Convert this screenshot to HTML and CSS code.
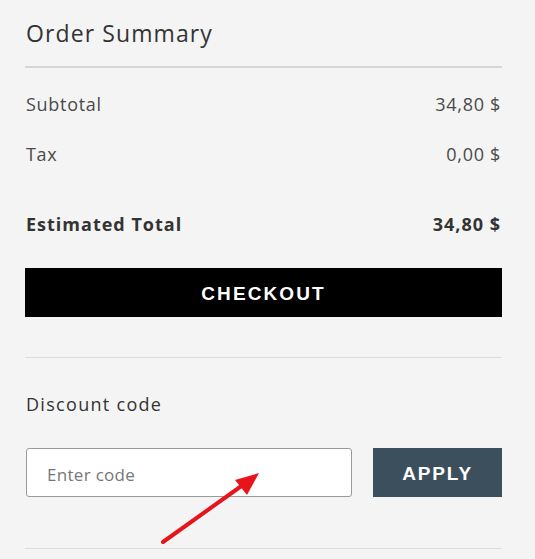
FILE: index.html
```html
<html lang="en">
  <head>
    <title>Order Summary</title>
    <link rel="stylesheet" href="styles.css">
  </head>
  <body>
    <div class="summary">
      <h2 class="summary-title">Order Summary</h2>
      <hr class="divider divider-thick">

      <div class="summary-row">
        <span>Subtotal</span>
        <span>34,80 $</span>
      </div>
      <div class="summary-row">
        <span>Tax</span>
        <span>0,00 $</span>
      </div>
      <div class="summary-row summary-total">
        <span>Estimated Total</span>
        <span>34,80 $</span>
      </div>

      <button type="button" class="btn btn-checkout">CHECKOUT</button>

      <hr class="divider divider-mid">

      <label for="discount-code" class="discount-label">Discount code</label>
      <form class="discount-form">
        <input type="text" id="discount-code" class="discount-input" placeholder="Enter code">
        <button type="button" class="btn btn-apply">APPLY</button>
      </form>

      <hr class="divider divider-bottom">

      <svg class="annotation" width="120" height="90" viewBox="0 0 120 90">
        <line x1="8" y1="82" x2="92" y2="22" stroke="#e8141b" stroke-width="4" stroke-linecap="round"/>
        <polygon points="104,13 80,20 92,35" fill="#e8141b"/>
      </svg>
    </div>
  </body>
</html>
```

FILE: styles.css
```css
body {
  margin: 0;
  background: #f4f4f4;
  color: #3a3a3a;
  font-family: "Open Sans", "Liberation Sans", sans-serif;
}
.summary {
  position: relative;
  width: 477px;
  padding: 18px 0 0 25px;
}
.summary-title {
  margin: 0 0 18px 1px;
  font-size: 23px;
  line-height: 30px;
  font-weight: 400;
  letter-spacing: 1.1px;
  color: #333;
}
.divider {
  margin: 0;
  border: 0;
  height: 1px;
  background: #dcdcdc;
}
.divider-thick {
  height: 2px;
  background: #d6d6d6;
}
.summary-row {
  display: flex;
  justify-content: space-between;
  font-size: 18px;
  line-height: 24px;
  font-weight: 400;
  letter-spacing: 0.7px;
  color: #4a4a4a;
  margin: 24px 1px 26px 1px;
}
.summary-row + .summary-row {
  margin-top: 0;
}
.summary-total {
  margin-top: 46px !important;
  margin-bottom: 32px;
  font-weight: 700;
  letter-spacing: 1px;
  color: #333;
}
.btn {
  border: 0;
  color: #fff;
  font-family: "Liberation Sans", Arial, sans-serif;
  font-weight: 700;
  cursor: pointer;
}
.btn-checkout {
  display: block;
  width: 100%;
  height: 49px;
  padding-top: 3px;
  background: #000;
  font-size: 19px;
  letter-spacing: 2.1px;
}
.divider-mid {
  margin-top: 40px;
}
.discount-label {
  display: block;
  margin: 34px 0 32px 1px;
  font-size: 18px;
  line-height: 24px;
  letter-spacing: 1.3px;
  color: #333;
}
.discount-form {
  display: flex;
  gap: 21px;
  margin: 0;
}
.discount-input {
  box-sizing: border-box;
  width: 327px;
  height: 49px;
  margin-left: 1px;
  padding: 3px 20px 0;
  border: 1px solid #9a9a9a;
  border-radius: 3px;
  background: #fff;
  font-family: "Open Sans", sans-serif;
  font-size: 17px;
  letter-spacing: 0.3px;
}
.discount-input::placeholder {
  color: #777;
}
.btn-apply {
  width: 129px;
  height: 49px;
  padding-top: 3px;
  background: #3c4f5c;
  font-size: 19px;
  letter-spacing: 1.8px;
}
.divider-bottom {
  margin-top: 51px;
}
.annotation {
  position: absolute;
  left: 155px;
  top: 460px;
}
```
